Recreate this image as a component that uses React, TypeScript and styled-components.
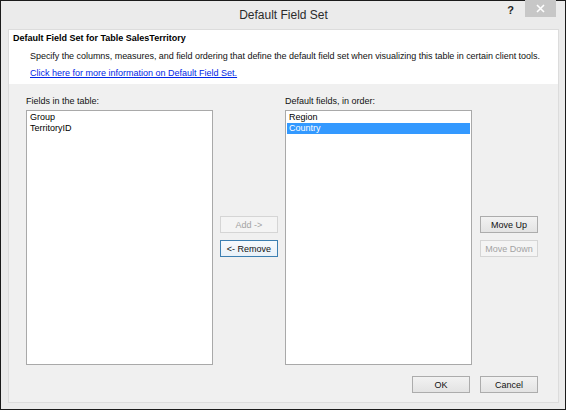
import styled, { createGlobalStyle } from 'styled-components';

const GlobalStyle = createGlobalStyle`
  html, body {
    margin: 0;
    padding: 0;
    background: #ffffff;
  }
  * {
    box-sizing: border-box;
  }
`;

const leftFields = ['Group', 'TerritoryID'];
const orderedFields = ['Region', 'Country'];
const selectedField = 'Country';

const App = () => {
    return (
        <>
            <GlobalStyle />
            <Window>
                <TitleBar>
                    <Title>Default Field Set</Title>
                    <TitleControls>
                        <HelpGlyph>?</HelpGlyph>
                        <CloseButton>
                            <svg width="9" height="9" viewBox="0 0 9 9">
                                <path d="M1 1 L8 8 M8 1 L1 8" stroke="#ffffff" strokeWidth="1.6" />
                            </svg>
                        </CloseButton>
                    </TitleControls>
                </TitleBar>

                <Content>
                    <HeaderPanel>
                        <HeaderTitle>Default Field Set for Table SalesTerritory</HeaderTitle>
                        <HeaderText>
                            Specify the columns, measures, and field ordering that define the default field set when visualizing this table in certain client tools.
                        </HeaderText>
                        <HeaderLink href="#">Click here for more information on Default Field Set.</HeaderLink>
                    </HeaderPanel>

                    <Body>
                        <Lists>
                            <ListColumn>
                                <FieldLabel>Fields in the table:</FieldLabel>
                                <ListBox>
                                    {leftFields.map(f => (
                                        <ListItem key={f}>{f}</ListItem>
                                    ))}
                                </ListBox>
                            </ListColumn>

                            <ButtonStack>
                                <DialogButton $disabled>Add -&gt;</DialogButton>
                                <DialogButton $focused>&lt;- Remove</DialogButton>
                            </ButtonStack>

                            <ListColumn>
                                <FieldLabel>Default fields, in order:</FieldLabel>
                                <ListBox>
                                    {orderedFields.map(f => (
                                        <ListItem key={f} $selected={f === selectedField}>{f}</ListItem>
                                    ))}
                                </ListBox>
                            </ListColumn>

                            <ButtonStack $shifted>
                                <DialogButton>Move Up</DialogButton>
                                <DialogButton $disabled>Move Down</DialogButton>
                            </ButtonStack>
                        </Lists>

                        <Footer>
                            <DialogButton>OK</DialogButton>
                            <DialogButton>Cancel</DialogButton>
                        </Footer>
                    </Body>
                </Content>
            </Window>
        </>
    );
};

const Window = styled.div`
  width: 566px;
  height: 410px;
  border: 1px solid #1b1b1b;
  background: #ebebeb;
  display: flex;
  flex-direction: column;
  padding: 0 6px 6px 7px;
  font-family: "Liberation Sans", Arial, sans-serif;
  color: #000;
`;

const TitleBar = styled.div`
  height: 28px;
  position: relative;
  display: flex;
  align-items: center;
  justify-content: center;
  flex-shrink: 0;
`;

const Title = styled.div`
  font-size: 12px;
  color: #2b2b2b;
  margin-top: -1px;
`;

const TitleControls = styled.div`
  position: absolute;
  top: -1px;
  right: 3px;
  display: flex;
  align-items: flex-start;
  gap: 11px;
`;

const HelpGlyph = styled.span`
  font-size: 11px;
  font-weight: bold;
  color: #222;
  margin-top: 4px;
`;

const CloseButton = styled.div`
  width: 31px;
  height: 17px;
  background: #c7c7c7;
  display: flex;
  align-items: center;
  justify-content: center;
`;

const Content = styled.div`
  flex: 1;
  display: flex;
  flex-direction: column;
  background: #f0f0f0;
  border: 1px solid #dcdcdc;
`;

const HeaderPanel = styled.div`
  background: #ffffff;
  height: 54px;
  padding: 3px 4px 0 4px;
  display: flex;
  flex-direction: column;
`;

const HeaderTitle = styled.div`
  font-size: 9px;
  font-weight: bold;
  line-height: 11px;
`;

const HeaderText = styled.div`
  font-size: 9px;
  line-height: 11px;
  margin: 7px 0 0 17px;
  color: #111;
  white-space: nowrap;
  letter-spacing: -0.04px;
`;

const HeaderLink = styled.a`
  font-size: 9px;
  line-height: 11px;
  margin: 6px 0 0 17px;
  color: #0026e6;
  text-decoration: underline;
  align-self: flex-start;
`;

const Body = styled.div`
  flex: 1;
  display: flex;
  flex-direction: column;
  padding: 12px 20px 9px 17px;
`;

const Lists = styled.div`
  display: grid;
  grid-template-columns: 187px 58px 187px 59px;
  column-gap: 7px;
`;

const ListColumn = styled.div`
  display: flex;
  flex-direction: column;
`;

const FieldLabel = styled.div`
  font-size: 9px;
  line-height: 11px;
  color: #111;
  margin-bottom: 3px;
`;

const ListBox = styled.div`
  height: 255px;
  background: #ffffff;
  border: 1px solid #a9a9a9;
  padding: 1px 1px;
`;

const ListItem = styled.div<{ $selected?: boolean }>`
  font-size: 9px;
  line-height: 11px;
  padding-left: 2px;
  background: ${props => props.$selected ? '#3399ff' : 'transparent'};
  color: ${props => props.$selected ? '#ffffff' : '#000000'};
`;

const ButtonStack = styled.div<{ $shifted?: boolean }>`
  display: flex;
  flex-direction: column;
  gap: 7px;
  align-self: center;
  margin-top: 12px;
  margin-left: ${props => props.$shifted ? '1px' : '0'};
`;

const DialogButton = styled.div<{ $disabled?: boolean; $focused?: boolean }>`
  width: 58px;
  height: 17px;
  display: flex;
  align-items: center;
  justify-content: center;
  font-size: 9px;
  border: 1px solid ${props => props.$focused ? '#3c7fb1' : props.$disabled ? '#d5d5d5' : '#acacac'};
  background: ${props => props.$disabled
        ? '#f4f4f4'
        : props.$focused
            ? 'linear-gradient(#f6fafd, #e9f1f8)'
            : 'linear-gradient(#f2f2f2, #e3e3e3)'};
  color: ${props => props.$disabled ? '#a3a3a3' : '#111'};
`;

const Footer = styled.div`
  display: flex;
  justify-content: flex-end;
  gap: 10px;
  margin-top: 11px;
`;

export default App;
